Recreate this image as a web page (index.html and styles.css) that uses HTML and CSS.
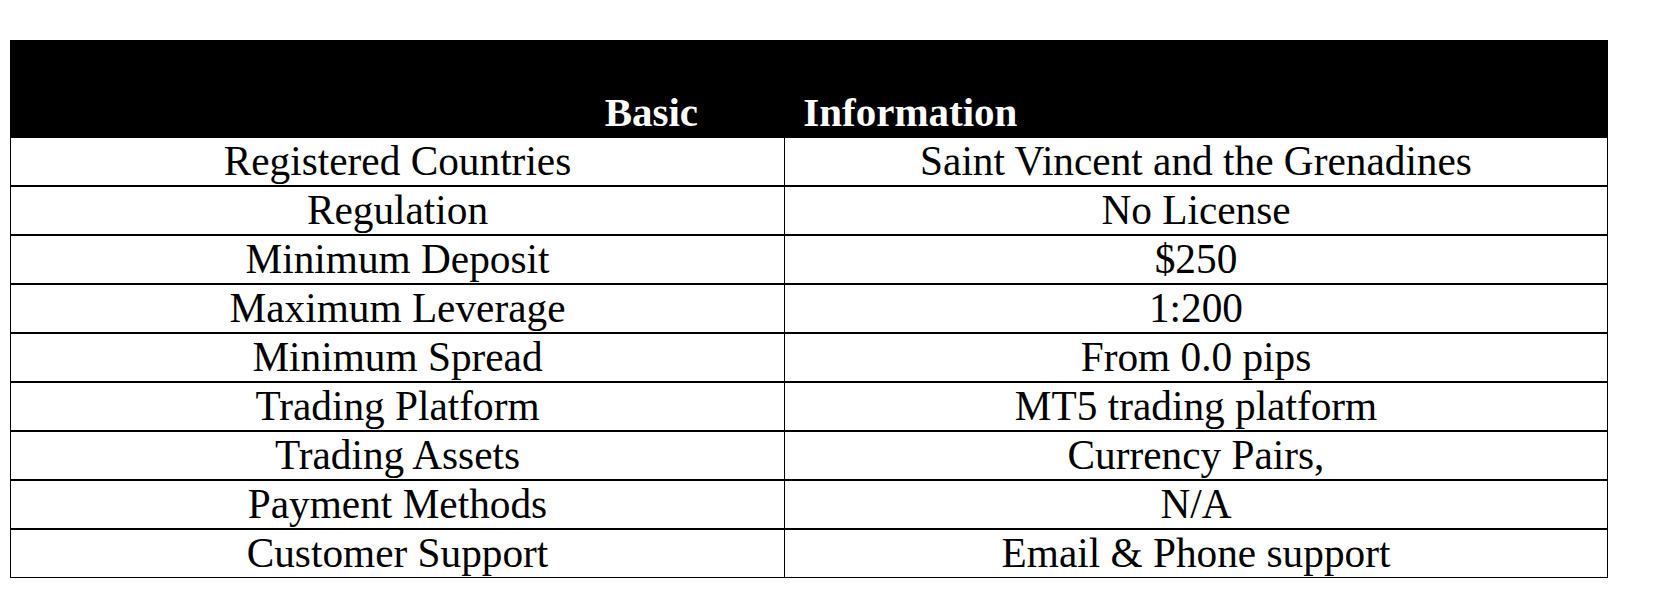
FILE: index.html
```html
<!DOCTYPE html>
<html lang="en">
<head>
<meta charset="utf-8">
<title>Basic Information</title>
<link rel="stylesheet" href="styles.css">
</head>
<body>
<table class="info">
  <colgroup>
    <col class="col-label">
    <col class="col-value">
  </colgroup>
  <thead>
    <tr>
      <th class="head" colspan="2">Basic Information</th>
    </tr>
  </thead>
  <tbody>
    <tr><td class="label">Registered Countries</td><td class="value">Saint Vincent and the Grenadines</td></tr>
    <tr><td class="label">Regulation</td><td class="value">No License</td></tr>
    <tr><td class="label">Minimum Deposit</td><td class="value">$250</td></tr>
    <tr><td class="label">Maximum Leverage</td><td class="value">1:200</td></tr>
    <tr><td class="label">Minimum Spread</td><td class="value">From 0.0 pips</td></tr>
    <tr><td class="label">Trading Platform</td><td class="value">MT5 trading platform</td></tr>
    <tr><td class="label">Trading Assets</td><td class="value">Currency Pairs,</td></tr>
    <tr><td class="label">Payment Methods</td><td class="value">N/A</td></tr>
    <tr class="last"><td class="label">Customer Support</td><td class="value">Email &amp; Phone support</td></tr>
  </tbody>
</table>
</body>
</html>
```

FILE: styles.css
```css
html, body {
  margin: 0;
  padding: 0;
  background: #ffffff;
}

body {
  padding: 40px 0 0 10px;
  font-family: "Liberation Serif", "Times New Roman", serif;
  color: #000000;
}

.info {
  table-layout: fixed;
  border-collapse: separate;
  border-spacing: 0;
  width: 1598px;
  font-size: 41.3px;
}

.col-label { width: 775px; }
.col-value { width: 823px; }

.head {
  background: #000000;
  color: #ffffff;
  font-weight: bold;
  font-size: 41px;
  text-align: center;
  word-spacing: 95px;
  line-height: 47px;
  padding: 49px 0 2px 4px;
}

td {
  padding: 0;
  height: 47px;
  line-height: 47px;
  text-align: center;
  white-space: nowrap;
  border-bottom: 2px solid #000000;
  border-right: 1px solid #000000;
}

td.label {
  border-left: 1px solid #000000;
}

tr.last td {
  border-bottom-width: 1px;
}
```
